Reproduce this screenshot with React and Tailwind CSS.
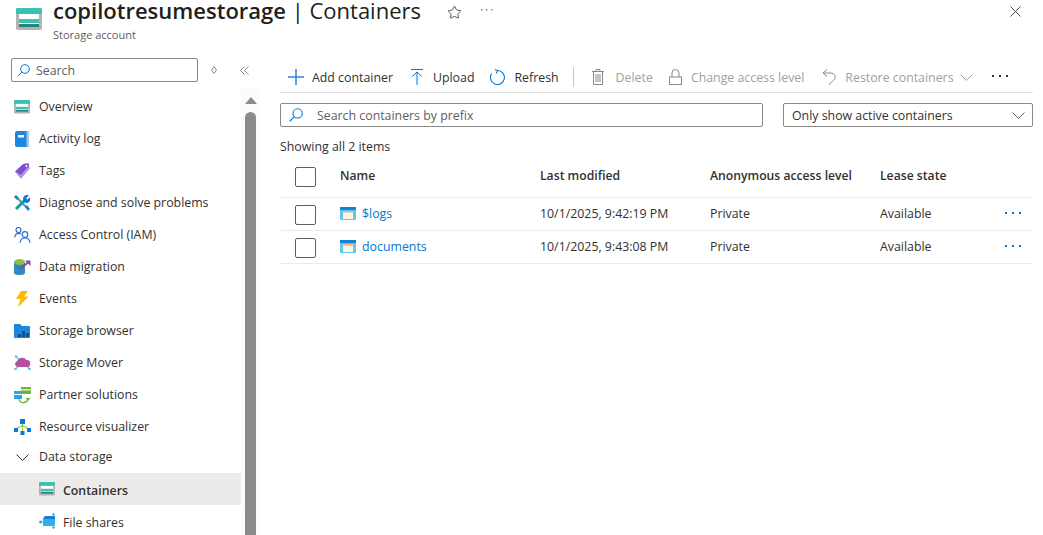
import { Star, X } from "lucide-react";

const StorageIcon = ({ size = 26 }) => (
  <svg width={size} height={size * 0.85} viewBox="0 0 26 22">
    <path d="M0 5h26v15a2 2 0 0 1-2 2H2a2 2 0 0 1-2-2z" fill="#b3b3b3" />
    <rect x="3" y="6" width="20" height="13" fill="#fff" />
    <path d="M1 0h24a1 1 0 0 1 1 1v5H0V1a1 1 0 0 1 1-1z" fill="#37c2b1" />
    <rect x="3" y="11" width="20" height="4" fill="#37c2b1" />
    <rect x="3" y="16" width="20" height="3" fill="#258277" />
  </svg>
);

const ActivityIcon = () => (
  <svg width="16" height="16" viewBox="0 0 16 16">
    <rect x="1" y="0" width="14" height="16" rx="2" fill="#1b87de" />
    <rect x="12.500" y="0" width="2.500" height="16" rx="1" fill="#9ccbf0" />
    <rect x="4" y="4" width="6" height="2.500" fill="#fff" />
  </svg>
);

const TagIcon = () => (
  <svg width="16" height="16" viewBox="0 0 16 16">
    <path d="M1 8.500 9 1l5.500-1 1 5.500L7 15.500z" fill="#7c52cc" />
    <path d="M1 8.500l6 7L15.500 5.500 14 4l-7 8z" fill="#b796f9" />
    <circle cx="12.500" cy="3" r="1" fill="#fff" />
  </svg>
);

const WrenchIcon = () => (
  <svg width="16" height="16" viewBox="0 0 16 16">
    <path d="M1.500 1 13.500 13.500" stroke="#7a8a94" strokeWidth="2" />
    <path d="M0 2l2-2 3 3-2 2z" fill="#0f8fb8" />
    <path d="M11 12l2-2 3 4-2 2z" fill="#1b87de" />
    <path d="M2 14 11 5" stroke="#0f9fb0" strokeWidth="3" />
    <path d="M9 4a4 4 0 0 1 6-3.500l-3 2.500 1.500 1.500 2.500-2.500a4 4 0 0 1-6 5z" fill="#0a78d6" />
  </svg>
);

const IamIcon = () => (
  <svg width="17" height="16" viewBox="0 0 17 16" fill="none" stroke="#2a6fd6" strokeWidth="1.2">
    <circle cx="4.500" cy="3" r="2.500" />
    <path d="M.6 10.500c.3-2.500 1.600-4.200 3.900-4.200 1 0 1.700.2 2.300.7" />
    <circle cx="11" cy="7.500" r="2.800" />
    <path d="M6 15.800c.3-2.800 2.200-4.800 5-4.800s4.700 2 5 4.800" />
  </svg>
);

const MigrationIcon = () => (
  <svg width="17" height="16" viewBox="0 0 17 16">
    <path d="M0 3h11v11c0 1-2 2-5.500 2S0 15 0 14z" fill="#2b8cc0" />
    <ellipse cx="5.500" cy="3" rx="5.500" ry="3" fill="#8cbf4a" />
    <path d="M6 10l8-6.500" stroke="#7d4aa8" strokeWidth="1.800" />
    <path d="M11 1.500h5.500V7z" fill="#7d4aa8" />
  </svg>
);

const BoltIcon = () => (
  <svg width="16" height="16" viewBox="0 0 16 16">
    <path d="M7 0h7l-4 5.500h4.500L4 16l2.500-8H2z" fill="#fcb900" />
  </svg>
);

const BrowserIcon = () => (
  <svg width="16" height="14" viewBox="0 0 16 14">
    <path d="M0 1a1 1 0 0 1 1-1h5l2 2h7a1 1 0 0 1 1 1v10a1 1 0 0 1-1 1H1a1 1 0 0 1-1-1z" fill="#1b87de" />
    <rect x="4" y="10" width="3" height="3" fill="#0c4f94" />
    <rect x="8" y="7" width="3" height="6" fill="#0c4f94" />
    <rect x="12" y="9" width="3" height="4" fill="#0c4f94" />
  </svg>
);

const MoverIcon = () => (
  <svg width="17" height="16" viewBox="0 0 17 16">
    <path d="M2 1.500l3 3M1.500 14l3-3M15.500 14l-3-3" stroke="#50c8e8" strokeWidth="1.200" />
    <circle cx="1.500" cy="14" r="1.300" fill="#50c8e8" />
    <circle cx="15.500" cy="14" r="1.300" fill="#50c8e8" />
    <circle cx="2" cy="1.500" r="1.300" fill="#50c8e8" />
    <path d="M4 12a3 3 0 0 1-1-5.800A5.500 5.500 0 0 1 12.500 5a3.500 3.500 0 0 1 .5 7z" fill="#b4519e" />
  </svg>
);

const PartnerIcon = () => (
  <svg width="17" height="17" viewBox="0 0 17 17">
    <rect x="0" y="4" width="8" height="8" fill="#2aa5e0" />
    <rect x="0" y="7" width="8" height="1" fill="#fff" />
    <rect x="7" y="0" width="10" height="7" fill="#6fb33e" />
    <rect x="7" y="2" width="10" height="1.500" fill="#d8e9c8" />
    <path d="M5 12c.5 4 7 5.500 9 .5" fill="none" stroke="#6fb33e" strokeWidth="1.300" />
    <path d="M11.500 11h5l-2.500 3z" fill="#6fb33e" />
  </svg>
);

const VisualizerIcon = () => (
  <svg width="17" height="16" viewBox="0 0 17 16">
    <path d="M8.500 4v8M2 10l6.500-3.500L15 10" fill="none" stroke="#8fc95a" strokeWidth="1.200" />
    <rect x="6" y="0" width="5" height="5" fill="#0a78d6" />
    <rect x="0" y="9" width="4" height="4" fill="#0a78d6" />
    <rect x="13" y="9" width="4" height="4" fill="#0a78d6" />
    <rect x="6.500" y="12" width="4" height="4" fill="#0a78d6" />
  </svg>
);

const ShareIcon = () => (
  <svg width="17" height="16" viewBox="0 0 17 16">
    <circle cx="1.500" cy="9" r="1.400" fill="#2ea8e0" />
    <path d="M1.500 9H5" stroke="#2ea8e0" />
    <circle cx="14.500" cy="1.500" r="1.200" fill="#2ea8e0" />
    <circle cx="14.500" cy="14.500" r="1.200" fill="#2ea8e0" />
    <path d="M6 3h9a1 1 0 0 1 1 1v8a1 1 0 0 1-1 1H5a1 1 0 0 1-1-1V6z" fill="#2cb2e8" />
    <path d="M6 3h9a1 1 0 0 1 1 1v2H4z" fill="#1a7fd0" />
  </svg>
);

const ContainerIcon = () => (
  <svg width="16" height="13" viewBox="0 0 16 13">
    <rect width="16" height="13" fill="#5cc8f0" />
    <rect width="16" height="3" fill="#1284d8" />
    <rect x="3" y="4" width="10" height="8" fill="#fdf5e4" />
    <rect x="3" y="4" width="10" height="1.500" fill="#f4b06a" />
  </svg>
);

const SearchGlass = ({ size = 13 }) => (
  <svg width={size} height={size} viewBox="0 0 13 13" fill="none" stroke="#0078d4" strokeWidth="1">
    <circle cx="8" cy="5" r="4.300" />
    <path d="M5 8 .7 12.300" />
  </svg>
);

const Chevron = ({ color = "#605e5c" }) => (
  <svg width="13" height="7" viewBox="0 0 13 7" fill="none" stroke={color} strokeWidth="1">
    <path d="M.5.500l6 6 6-6" />
  </svg>
);

const Dots = ({ color = "#323130" }) => (
  <svg width="16" height="3" viewBox="0 0 16 3" fill={color}>
    <rect x="0" y="0" width="2" height="2" />
    <rect x="7" y="0" width="2" height="2" />
    <rect x="14" y="0" width="2" height="2" />
  </svg>
);

const SmallDots = () => (
  <svg width="12" height="2" viewBox="0 0 12 2" fill="#8a8886">
    <rect x="0" y="0" width="1.500" height="1.500" />
    <rect x="5" y="0" width="1.500" height="1.500" />
    <rect x="10" y="0" width="1.500" height="1.500" />
  </svg>
);

const PlusIcon = () => (
  <svg width="16" height="16" viewBox="0 0 16 16" fill="none" stroke="#2b88d8" strokeWidth="1.500">
    <path d="M8 0v16M0 8h16" />
  </svg>
);

const UploadIcon = () => (
  <svg width="12" height="16" viewBox="0 0 12 16" fill="none" stroke="#0078d4" strokeWidth="1">
    <path d="M0 .5h12M6 3v13M1.200 7.500 6 3l4.800 4.500" />
  </svg>
);

const RefreshIcon = () => (
  <svg width="15" height="16" viewBox="0 0 15 16" fill="none" stroke="#0078d4" strokeWidth="1.100">
    <path d="M7.500 1.500A7 7 0 1 1 1.700 4.500" />
    <path d="M5 .5 7.500 1.500 6.500 4.500" />
  </svg>
);

const TrashIcon = () => (
  <svg width="12" height="16" viewBox="0 0 12 16" fill="none" stroke="#8a8886" strokeWidth="1">
    <path d="M0 2.500h12M4 2.500V.5h4v2M1.500 2.500v13h9v-13M4 5v8M6 5v8M8 5v8" />
  </svg>
);

const LockIcon = () => (
  <svg width="13" height="16" viewBox="0 0 13 16" fill="none" stroke="#8a8886" strokeWidth="1">
    <rect x=".5" y="8" width="12" height="7.500" />
    <path d="M3 8V4a3.500 3.500 0 0 1 7 0v4" />
  </svg>
);

const UndoIcon = () => (
  <svg width="14" height="16" viewBox="0 0 14 16" fill="none" stroke="#8a8886" strokeWidth="1">
    <path d="M5 .5 1 4l4 3.500M1 4h7c3 0 5.200 1.500 5.200 4S10.500 12.500 7 15.500" />
  </svg>
);

const navItems = [
  ["Overview", <StorageIcon size={16} />],
  ["Activity log", <ActivityIcon />],
  ["Tags", <TagIcon />],
  ["Diagnose and solve problems", <WrenchIcon />],
  ["Access Control (IAM)", <IamIcon />],
  ["Data migration", <MigrationIcon />],
  ["Events", <BoltIcon />],
  ["Storage browser", <BrowserIcon />],
  ["Storage Mover", <MoverIcon />],
  ["Partner solutions", <PartnerIcon />],
  ["Resource visualizer", <VisualizerIcon />],
];

const rows = [
  ["$logs", "10/1/2025, 9:42:19 PM"],
  ["documents", "10/1/2025, 9:43:08 PM"],
];

const ToolButton = ({ icon, label, disabled, className = "" }) => (
  <div className={`flex items-center ${disabled ? "text-[#a19f9d]" : "text-[#323130]"} ${className}`}>
    {icon}
    <span className="pt-[2px]">{label}</span>
  </div>
);

const Checkbox = () => <div className="h-[20px] w-[21px] rounded-[2px] border border-[#605e5c]" />;

export default function App() {
  return (
    <div className="flex h-[535px] w-[1043px] flex-col overflow-hidden bg-white text-[12.35px] text-[#323130] [font-family:'Open_Sans',sans-serif]">
      <header className="flex h-[46px] shrink-0 items-start pl-[16px] pr-[18px]">
        <div className="mt-[8px] w-[37px] shrink-0">
          <StorageIcon />
        </div>
        <div className="flex flex-col">
          <div className="flex items-center">
            <h1 className="mt-[-1px] h-[25px] text-[22px] leading-[22px] text-[#201f1e]">
              <span className="font-semibold">copilotresumestorage</span> | Containers
            </h1>
            <Star size={15} strokeWidth={1.3} className="ml-[26px] text-[#323130]" />
            <div className="mb-[4px] ml-[19px] flex">
              <SmallDots />
            </div>
          </div>
          <span className="mt-[4px] text-[11px] leading-[14px] text-[#605e5c]">Storage account</span>
        </div>
        <X size={19} strokeWidth={1.1} className="ml-auto mt-[2px] text-[#323130]" />
      </header>

      <div className="flex min-h-0 flex-1">
        <aside className="flex w-[259px] shrink-0 flex-col">
          <div className="mt-[12px] flex items-center pl-[11px]">
            <div className="flex h-[24px] w-[187px] shrink-0 items-center gap-[6px] rounded-[2px] border border-[#8a8886] pl-[5px] text-[#605e5c]">
              <SearchGlass />
              <span className="pt-[2px]">Search</span>
            </div>
            <svg width="6" height="8" viewBox="0 0 6 8" className="ml-[13px]" fill="none" stroke="#8a8886">
              <path d="M3 .5 5.500 4 3 7.500.5 4z" />
            </svg>
            <svg width="9" height="9" viewBox="0 0 9 9" className="ml-[23px]" fill="none" stroke="#8a8886">
              <path d="M4.500.5.500 4.500l4 4M8.500.5l-4 4 4 4" />
            </svg>
          </div>
          <div className="mt-[7px] flex min-h-0 flex-1">
            <nav className="flex w-[241px] shrink-0 flex-col pt-[2px]">
              {navItems.map(([label, icon]) => (
                <div key={label} className="flex h-[32px] shrink-0 items-center">
                  <div className="flex w-[39px] shrink-0 justify-center pl-[6px] pr-[1px]">{icon}</div>
                  <span>{label}</span>
                </div>
              ))}
              <div className="flex h-[29px] shrink-0 items-center">
                <div className="flex w-[39px] shrink-0 justify-center pl-[6px] pr-[1px]">
                  <Chevron color="#323130" />
                </div>
                <span>Data storage</span>
              </div>
              <div className="mt-[1px] flex h-[32px] shrink-0 items-center bg-[#edebe9] pl-[39px] font-semibold">
                <div className="w-[24px] shrink-0">
                  <StorageIcon size={16} />
                </div>
                <span className="pt-[4px]">Containers</span>
              </div>
              <div className="flex h-[32px] shrink-0 items-center pl-[39px]">
                <div className="w-[24px] shrink-0">
                  <ShareIcon />
                </div>
                <span className="pt-[4px]">File shares</span>
              </div>
            </nav>
            <div className="flex w-[18px] shrink-0 flex-col items-center bg-[#fbfbfb] pl-[4px] pr-[3px]">
              <div className="mt-[8px] h-0 w-0 border-x-[6px] border-b-[7px] border-x-transparent border-b-[#8a8a8a]" />
              <div className="mt-[8px] w-[11px] flex-1 rounded-t-[6px] bg-[#8a8a8a]" />
            </div>
          </div>
        </aside>

        <main className="ml-[21px] flex w-[753px] shrink-0 flex-col">
          <div className="flex h-[47px] shrink-0 items-center border-b border-[#e1dfdd] pl-[8px] pt-[16px]">
            <ToolButton className="gap-[8px]" icon={<PlusIcon />} label="Add container" />
            <ToolButton className="ml-[18px] gap-[10px]" icon={<UploadIcon />} label="Upload" />
            <ToolButton className="ml-[16px] gap-[9px]" icon={<RefreshIcon />} label="Refresh" />
            <div className="ml-[14px] h-[20px] w-px bg-[#c8c6c4]" />
            <ToolButton disabled className="ml-[18px] gap-[12px]" icon={<TrashIcon />} label="Delete" />
            <ToolButton disabled className="ml-[16px] gap-[9px]" icon={<LockIcon />} label="Change access level" />
            <ToolButton disabled className="ml-[18px] gap-[9px]" icon={<UndoIcon />} label="Restore containers" />
            <div className="ml-[6px]">
              <Chevron color="#a19f9d" />
            </div>
            <div className="mb-[2px] ml-[19px]">
              <Dots />
            </div>
          </div>

          <div className="mt-[10px] flex items-center justify-between">
            <div className="flex h-[24px] w-[483px] items-center rounded-[2px] border border-[#8a8886] pl-[8px] text-[#605e5c]">
              <SearchGlass size={14} />
              <span className="ml-[14px] pt-[2px]">Search containers by prefix</span>
            </div>
            <div className="flex h-[24px] w-[250px] items-center justify-between rounded-[2px] border border-[#8a8886] pl-[8px] pr-[7px]">
              <span className="pt-[2px]">Only show active containers</span>
              <Chevron />
            </div>
          </div>

          <div className="mt-[11px] h-[18px] leading-[18px]">Showing all 2 items</div>

          <div className="flex h-[42px] shrink-0 items-center border-b border-[#edebe9] text-[12.2px] font-semibold">
            <div className="w-[60px] shrink-0 pl-[15px]"><Checkbox /></div>
            <div className="w-[200px] shrink-0">Name</div>
            <div className="w-[170px] shrink-0">Last modified</div>
            <div className="w-[170px] shrink-0">Anonymous access level</div>
            <div>Lease state</div>
          </div>
          {rows.map(([name, modified]) => (
            <div key={name} className="flex h-[33px] shrink-0 items-center border-b border-[#edebe9]">
              <div className="mt-[2px] w-[60px] shrink-0 pl-[15px]"><Checkbox /></div>
              <div className="flex w-[200px] shrink-0 items-center gap-[6px] text-[#0078d4]">
                <ContainerIcon />
                <span>{name}</span>
              </div>
              <div className="w-[170px] shrink-0">{modified}</div>
              <div className="w-[170px] shrink-0">Private</div>
              <div className="w-[125px] shrink-0">Available</div>
              <div className="mb-[2px]">
                <Dots color="#0078d4" />
              </div>
            </div>
          ))}
        </main>
      </div>
    </div>
  );
}
